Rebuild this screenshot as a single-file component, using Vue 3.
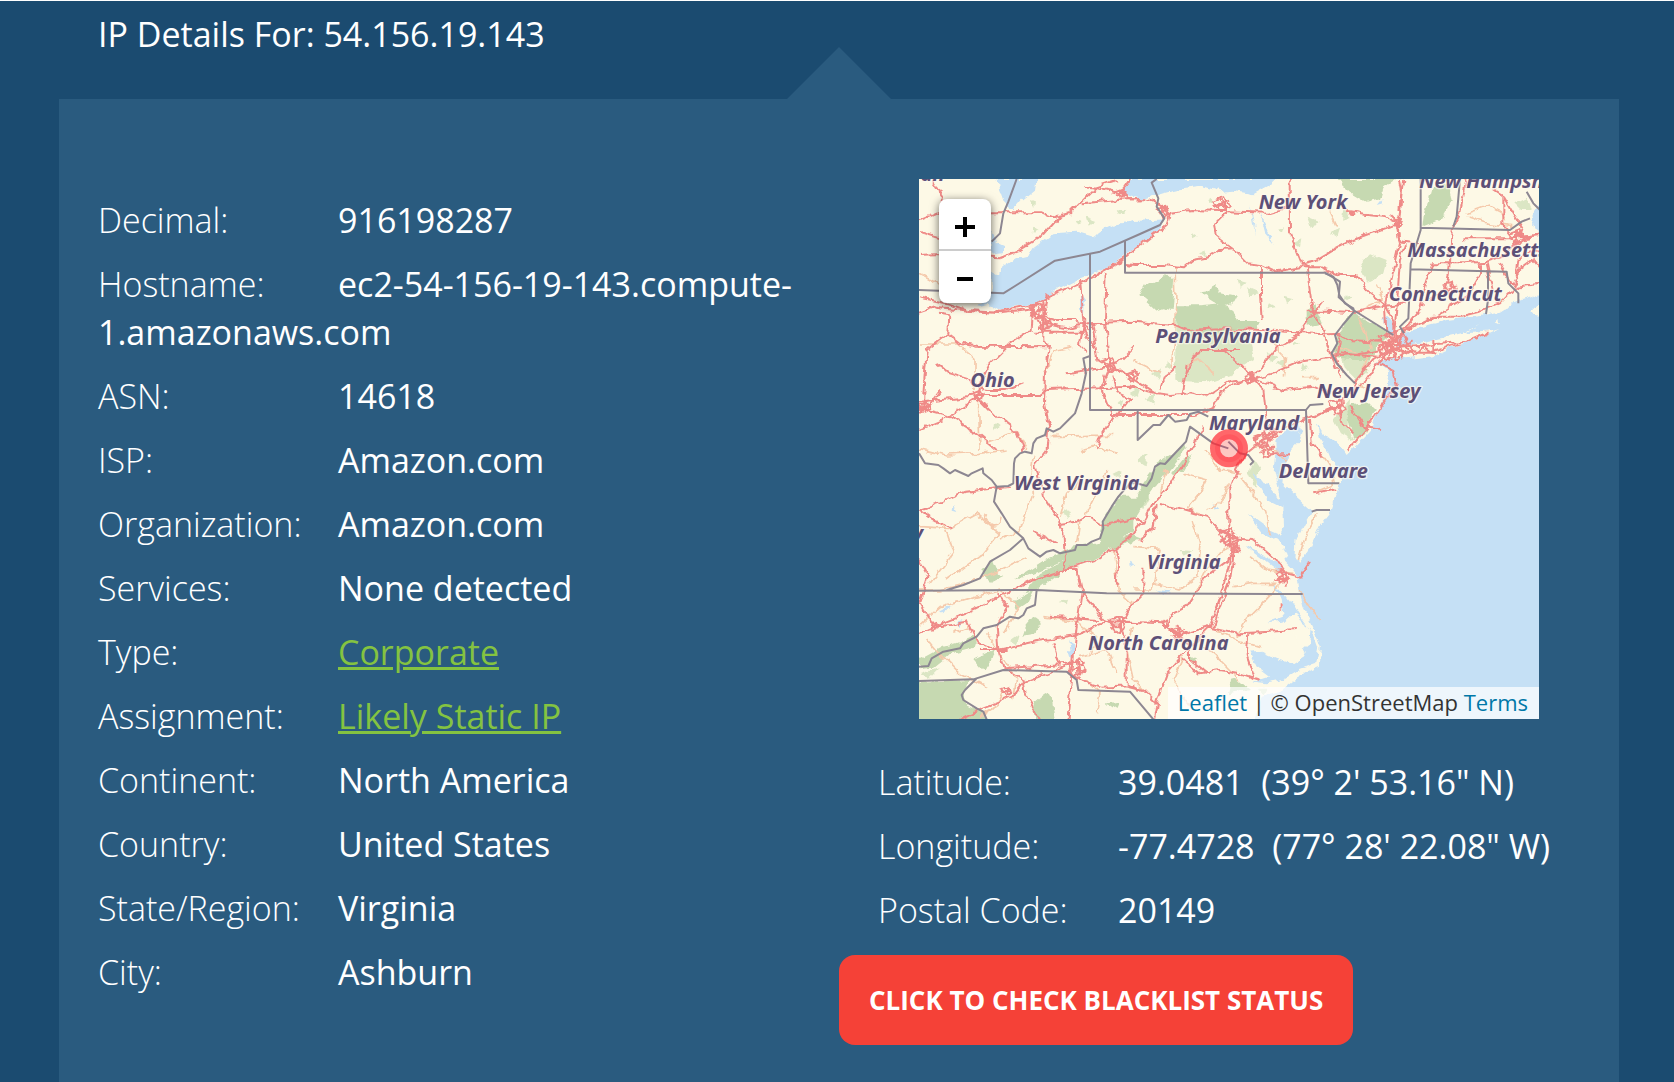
<script setup>
const facts = [
  { label: 'Decimal', value: '916198287' },
  { label: 'Hostname', value: 'ec2-54-156-19-143.compute-1.amazonaws.com' },
  { label: 'ASN', value: '14618' },
  { label: 'ISP', value: 'Amazon.com' },
  { label: 'Organization', value: 'Amazon.com' },
  { label: 'Services', value: 'None detected' },
  { label: 'Type', value: 'Corporate', link: true },
  { label: 'Assignment', value: 'Likely Static IP', link: true },
  { label: 'Continent', value: 'North America' },
  { label: 'Country', value: 'United States' },
  { label: 'State/Region', value: 'Virginia' },
  { label: 'City', value: 'Ashburn' },
]

const position = [
  { label: 'Latitude', value: '39.0481\u00a0 (39° 2\' 53.16" N)' },
  { label: 'Longitude', value: '-77.4728\u00a0 (77° 28\' 22.08" W)' },
  { label: 'Postal Code', value: '20149' },
]

// Map geometry: three units to one pixel at natural size.
const water = [
  'M293 57L410 57L405 92L370 120L345 150L325 150L312 130L298 90Z',
  'M690 57L1130 57L1110 75L1060 103L1000 92L960 97L900 80L840 88L790 100L730 118L680 105L672 90Z',
  'M275 210L285 225L290 245L312 255L312 280L275 284Z',
  'M275 400L275 332L300 345L304 325L350 295L388 286L400 265L460 220L530 215L580 230L605 212L640 195L700 183L795 178L770 215L700 270L620 325L540 355L470 390L410 430L350 440L300 452L265 432L240 437L255 440L232 436Z',
  'M1917 132L1900 160L1893 180L1903 205L1930 225Z',
  'M1930 390L1890 415L1840 430L1800 455L1740 468L1640 480L1570 500L1520 518L1494 535L1490 560L1480 590L1430 605L1455 625L1467 632L1460 680L1455 712L1430 765L1410 812L1375 850L1340 885L1330 870L1310 850L1285 835L1262 812L1248 788L1256 830L1282 868L1295 900L1318 935L1320 970L1306 1005L1290 1058L1262 1095L1248 1125L1230 1165L1200 1205L1186 1195L1190 1140L1215 1090L1238 1055L1215 1035L1180 1005L1150 975L1154 930L1170 880L1198 850L1208 808L1180 785L1160 815L1140 822L1126 845L1128 885L1124 935L1137 990L1150 1040L1152 1100L1135 1140L1160 1180L1150 1200L1175 1225L1192 1245L1198 1290L1210 1340L1232 1385L1250 1425L1262 1462L1260 1520L1220 1537L1180 1560L1130 1600L1085 1610L1060 1690L1930 1690Z',
  'M1120 1265L1150 1300L1180 1340L1205 1385L1232 1405L1228 1450L1205 1470L1215 1490L1180 1512L1130 1496L1085 1475L1050 1478L1070 1520L1110 1550L1060 1565L1100 1570L1150 1560L1200 1530L1245 1515L1255 1460L1240 1420L1215 1385L1190 1350L1150 1385L1100 1390L1155 1370L1145 1320Z',
  'M1060 940L1085 955L1120 1000L1150 1020L1150 1045L1100 1020L1080 985Z',
  'M1040 1060L1095 1100L1140 1120L1150 1145L1085 1120Z',
  'M1030 1155L1090 1185L1130 1205L1160 1245L1140 1240L1090 1200Z',
  'M1052 135L1064 180L1070 235L1062 190ZM1080 160L1095 220L1125 255L1105 215ZM1430 135L1450 110L1448 130ZM540 400L555 420L552 460L540 445Z',
  'M1450 480L1465 470L1482 490L1480 525L1462 510Z',
  'M210 185l8 14l-10 6zM1125 110l6 22l-8 -4zM160 1035l12 18l-14 -4zM120 1350l30 -14l-18 24zM690 1205l16 8l-14 8zM505 1440l14 8l2 44l-12 -8zM170 1385l20 -4l-8 18zM940 1030l18 16l-10 2zM770 1290l44 4l-20 8z',
]

const islands = [
  'M1490 562L1560 548L1640 530L1700 516L1740 490L1700 520L1760 515L1795 508L1720 540L1660 560L1600 588L1520 598L1480 590Z',
  'M1890 460L1930 420L1930 465ZM1784 492L1796 480L1796 495Z',
  'M1115 1420L1145 1425L1175 1418L1200 1445L1165 1460L1130 1450Z',
]

const forest = [
  'M718 405L735 375L765 368L800 340L822 360L820 400L815 450L790 445L770 452L745 428Z',
  'M826 436L900 436L960 430L1000 450L1020 500L1000 520L930 530L880 520L840 500L826 470Z',
  'M900 400L930 395L940 372L960 400L1010 410L1000 430L970 440L940 425Z',
  'M1310 57L1485 57L1450 80L1440 115L1400 125L1350 95Z',
  'M1575 160L1595 80L1650 75L1658 120L1625 180L1570 202Z',
  'M1310 525L1360 455L1475 520L1430 560L1410 600L1340 600L1300 590Z',
  'M1220 460L1245 430L1270 490L1220 500ZM990 500L1020 480L1080 480L1070 508Z',
  'M1340 740L1370 730L1400 725L1425 750L1395 820L1365 840L1350 800Z',
  'M610 1080L655 1010L700 1010L770 915L830 875L855 850L860 865L800 940L740 1020L700 1085L700 1110L640 1160L590 1195L480 1235L410 1290L370 1300L420 1240L500 1200L380 1250L350 1255L450 1190L520 1160L600 1145Z',
  'M650 1145L700 1120L728 1130L690 1150L620 1170ZM810 940L850 890L878 882L850 930L820 945Z',
  'M240 1240L275 1200L290 1235L310 1245L270 1265ZM340 1320L400 1290L380 1330L350 1350Z',
  'M57 1500L130 1460L170 1450L230 1425L225 1460L150 1480L100 1520L57 1525Z',
  'M50 1565L215 1560L185 1600L195 1630L250 1655L255 1690L50 1690Z',
  'M220 1500L285 1470L275 1500L250 1535ZM380 1400L405 1370L425 1385L400 1425L370 1430Z',
  'M400 1625L430 1600L455 1610L465 1690L410 1690ZM620 1630L655 1625L650 1650Z',
  'M990 1560L1010 1555L1050 1590L980 1600ZM865 1485L890 1500L875 1510Z',
]

const scrub = [
  'M826 480L1020 480L1050 540L1062 600L1000 640L920 667L826 662Z',
  'M1310 560L1430 560L1410 600L1400 640L1370 660L1340 630ZM1300 780L1350 720L1345 810L1365 845L1320 820Z',
  'M1840 130L1880 110L1895 150L1860 150ZM1380 310L1410 280L1460 300L1450 340L1400 365Z',
  'M1045 940L1060 900L1080 930L1065 985ZM700 1030L760 990L730 1050ZM480 1060l20 -12l14 24z',
  'M390 120l20 8l-14 12zM560 170l26 10l-20 14zM650 150l26 4l-16 12zM400 200l16 10l-18 8zM520 180l22 6l-14 10z',
  'M880 220l16 10l-18 8zM930 110l14 12l-20 4zM900 280l18 -6l-2 16zM1180 250l24 -12l-4 24zM1130 210l22 -8l-6 18z',
  'M1220 170l30 12l-18 22zM1330 150l22 18l-26 8zM1290 220l30 -14l-8 26zM1010 360l30 8l-24 22zM1040 385l34 14l-20 10z',
  'M1150 410l30 8l-22 14zM1110 430l20 12l-28 4zM690 700l30 -16l-10 30zM740 720l30 -20l-8 34zM650 730l20 -10l-6 20z',
  'M760 640l24 -12l-10 28zM800 605l20 14l-22 8zM1100 580l34 8l-24 20zM1130 610l30 -14l-8 26zM1180 540l20 14l-24 4z',
  'M710 900l30 -18l-6 34zM640 945l24 -12l-2 24zM285 790l14 10l-16 8zM330 1440l26 -18l-8 30zM840 1170l40 4l-26 16z',
  'M1210 610l20 10l-24 10zM1340 400l18 10l-20 10zM1070 1580l30 0l-8 24zM480 1325l24 -6l-4 14zM60 1540l60 -20l-30 30z',
]

const minorRoads = [
  'M57 552L175 552L222 595L222 690M235 720L240 870M57 340L120 375M455 830L570 826L640 826M260 850L350 815L380 870M825 320L828 430L815 620',
  'M57 865L140 885L240 880L320 870M57 1100L150 1105L230 1060L300 1120L250 1180L140 1260M260 1060A22 22 0 1 0 300 1070M430 640L470 570L520 560',
  'M57 1290L120 1290L200 1270L300 1230L380 1190M130 1090L160 1180L90 1270M300 1140L360 1110L400 1000L390 960L400 890',
  'M57 1400L120 1340L220 1310L300 1290L360 1340L310 1420M540 870L580 860L660 880M540 960L500 1000L480 1070M540 1080L530 1150',
  'M620 930L600 980L560 1060M640 1170L655 1290L700 1330M700 1160L780 1165L760 1290L700 1290M800 930L780 1000M850 940L920 960L900 1000L860 1050L900 1060',
  'M880 1080L900 1150L890 1250L840 1290L760 1270M920 1050L960 1030L985 970M990 1160L960 1180L920 1230L890 1290M1020 950L1060 1000L1100 1050L1110 1120',
  'M1050 1190L1100 1230L1180 1240M1000 1280L1060 1270L1130 1270M1150 1260L1080 1340L1040 1380L1010 1430M430 1370L530 1385L590 1430L570 1480',
  'M540 1490L620 1470L650 1540M700 1400L680 1470L700 1560L760 1620M850 1490L820 1560L870 1640M900 1450L960 1500L1020 1560M940 1400L1010 1440L1080 1460',
  'M260 1420L300 1480L350 1560L340 1620M120 1480L180 1540L260 1580M160 1420L210 1400M80 1440L130 1500M310 1590L290 1640L240 1670M560 1560L600 1600L590 1660',
  'M1700 160L1770 135L1800 150L1820 185M1700 170L1760 190L1840 200M1260 880L1290 920L1300 975L1240 1000M1255 1060L1215 1130L1195 1200M1320 700L1380 680L1440 700',
  'M1200 1290L1230 1340L1262 1380M1380 470L1410 560L1390 640M1310 560L1380 580M1200 650L1260 650M1110 540L1160 590L1150 650M1060 860L1130 870L1160 900',
  'M700 600L780 640M860 620L900 600L940 640M1270 120L1310 200M1430 370L1450 420L1400 440M920 870L960 930L1020 940',
]

const majorRoads = [
  'M57 185L120 158L300 157L425 157L460 172L510 160L560 110L590 80L650 60M95 57L128 110L128 160M57 216L118 235M57 288L120 285L300 295L350 275L430 225L480 168',
  'M548 130L600 125L680 118L740 118L790 135L810 160L800 195L730 250L680 290L625 325L540 370L440 410L400 435L300 455L200 450L140 430L57 412',
  'M57 458L110 440L200 452L300 460L400 448L410 432M800 160L880 150L1020 155L1100 158L1180 135M1340 155L1400 165L1450 170L1490 190L1496 230M550 75L590 80L660 100L690 57M665 100L690 118L720 118',
  'M940 135L975 125L975 160L945 190L950 230L1000 270L1040 310L1080 315L1080 400L1085 480M1169 57L1170 220L1205 310L1220 320L1230 400L1240 460L1270 510L1285 560L1300 600L1320 655',
  'M675 312L700 315L790 315L855 322L880 300L930 290L960 270L1000 268M960 240L1000 268M1060 315L1085 318L1120 335L1200 322L1260 322L1320 345L1370 345L1400 390L1450 430L1480 480L1480 530',
  'M1205 310L1250 300L1300 270L1360 240L1470 200L1496 190M1496 57L1505 100L1494 220L1500 250L1470 380L1455 450L1460 530M1496 240L1560 250M1496 190L1470 165',
  'M1510 57L1498 150M1515 250L1500 300L1490 440L1480 540M1690 310L1760 305L1810 290L1860 230L1930 225M1700 57L1680 160L1655 210L1650 310L1640 380L1590 420',
  'M1480 540L1540 500L1600 470L1680 470L1740 455L1800 430L1850 380L1930 370M1480 520L1520 505L1590 480L1650 440L1700 410L1740 340L1740 310M1500 530L1560 450L1580 370L1600 310L1690 310',
  'M1760 310L1780 400L1760 430M1800 310L1840 380L1860 330L1900 300L1930 340M1690 235L1840 235L1870 210L1810 110L1780 90M1810 110L1810 200L1840 235L1930 222M1850 350L1855 300L1880 280L1930 270',
  'M120 455L148 460L145 520L80 570L70 700L70 750L57 760M140 520L180 550L225 560L450 562M400 435L395 510L330 550L270 610L245 660L235 705M430 420L430 540L450 560L435 640L432 730L445 800L440 870L405 915L420 970',
  'M57 725L100 720L235 705L420 705L440 690L600 685L690 680L770 700L810 705L870 700L920 710L950 690L990 665L1070 655L1120 640L1200 605L1290 590L1370 585L1440 570',
  'M57 810L130 780L235 712M235 712L290 770L350 815L370 870M120 695L90 735L70 750L150 770L230 820L290 870M190 545L230 555L250 560M110 610L150 640L200 655L260 690L320 690L370 670',
  'M440 400L430 490L500 505L560 490L700 485L826 495L860 510L960 505L1080 510L1160 515L1285 520L1320 518M540 360L550 480L540 560L560 580M620 340L615 480L625 590L640 620L690 650',
  'M580 490L595 600L630 620L500 640M640 620L700 560M630 620L605 680L640 770L600 830L587 870M640 650L655 700L690 715L650 770M690 650L770 700M830 618L790 650L775 690',
  'M860 620L845 700M860 640L900 570L1020 570M700 665L680 640L640 620M390 460L470 480L520 480L570 510M400 515L560 515M545 490L560 530L590 560',
  'M630 765L880 765L940 745L960 700L1020 665L1060 650L1130 560L1190 530L1240 460L1270 420M1060 655L1030 620L970 570M1060 655L1090 690L1100 780L1080 830L1060 840',
  'M1060 655L1150 690L1240 680L1290 700M1220 455L1280 455L1360 460L1430 440L1520 430M1320 520L1310 590L1330 640M1320 580L1430 590M1310 520L1340 540L1440 545L1560 560',
  'M1480 560L1440 600L1400 660L1360 690L1310 740L1240 770L1160 800L1090 840L1040 880L1010 930L985 990L985 1100L995 1180L970 1280L930 1400L870 1460L800 1540L770 1630L760 1690',
  'M1490 560L1420 600L1370 660L1350 700L1300 750L1230 770M1440 610L1480 630L1490 670L1430 760L1400 805L1345 870M1310 730L1330 790L1360 820M1350 740L1390 800L1440 810M1230 780L1235 850L1265 890',
  'M1500 560L1560 555L1640 550L1700 545L1760 520M1490 575L1600 575L1680 550M1430 540L1520 580M1460 520L1500 570M1440 570L1510 540M1520 560L1540 590L1570 560L1600 580L1600 540',
  'M400 1115L470 1150M420 970L430 1010L470 1070L490 1120L495 1200L490 1230L530 1230L545 1300L530 1400L520 1500L505 1690M57 1050L130 1025L200 995L330 980M60 1050L100 1080L160 1100',
  'M480 1092L530 1085L560 1070L600 1095L650 1085L700 1075L730 1085L760 1030L820 960L860 890L910 800M490 1230L400 1260L300 1310L200 1360L100 1400L57 1420M500 1230L590 1200L680 1140L730 1080',
  'M57 1200L85 1250L60 1330L100 1400L150 1395L200 1385L225 1440L290 1470L400 1445L530 1425L600 1390L690 1385L780 1390L840 1425L930 1400L1020 1420L1110 1415L1190 1410',
  'M290 1300L325 1340L290 1400L295 1470L310 1525L370 1560L380 1610L430 1690M310 1525L520 1510L370 1570L340 1610L250 1645L160 1690M460 1450L480 1520M450 1370L600 1380M240 1470L320 1470',
  'M780 1035L850 1050L920 1070L960 1110L1000 1135L1060 1140L1090 1165L1130 1200L1160 1240L1200 1250L1230 1205M1000 1150L1000 1190L930 1240L900 1280L860 1340L820 1360L800 1400L870 1460L870 1500L920 1540',
  'M545 1300L580 1340L620 1390L660 1400M660 1395L690 1340L730 1300L730 1220M660 1395L680 1450L680 1570L720 1590M650 1280L655 1200L645 1160M1000 1190L990 1260L960 1340L940 1400',
  'M670 1575L730 1590L770 1630M505 1530L540 1560L600 1580L700 1575M850 1500L900 1540L960 1530L1020 1540L1080 1560M1045 1420L1040 1490L1060 1550M960 1110L1010 1130L970 1150',
  'M1140 1235L1150 1260L1120 1260M1160 1240L1160 1280M1145 1330L1145 1350M1010 1140L1010 1180M770 1035L760 1110L720 1140M1240 1000L1290 990L1310 985M1110 880L1170 880',
]

// Tangles of streets round the larger cities.
const cities = [
  [235, 708, 16], [415, 455, 24], [435, 490, 20], [630, 615, 24], [985, 1130, 26], [1003, 1165, 16], [1145, 1250, 20],
  [655, 1395, 24], [530, 1522, 24], [830, 1418, 18], [320, 1595, 14], [75, 742, 16], [965, 130, 22], [790, 155, 18],
  [1085, 845, 24], [1110, 820, 22], [1470, 545, 34], [1500, 560, 38], [1460, 575, 26], [1495, 190, 14], [1850, 230, 22],
  [1310, 740, 24], [695, 650, 18], [1050, 655, 16], [105, 1400, 12], [795, 1395, 14], [1650, 385, 18], [665, 100, 14], [1100, 870, 22],
]

const borders = [
  'M350 57L325 125L310 160L300 220L275 245M57 390L275 398L310 400L350 375L465 302L600 275L720 222L780 195L793 175L780 155L770 140L775 115L755 68L770 57',
  'M570 280L570 750L1218 750M675 240L675 338L1275 338L1320 365L1316 412L1360 450L1480 525M713 750L713 840L760 795L780 795L805 765L825 785L860 780L870 762L895 755L925 770',
  'M1275 340L1300 350L1312 375L1318 405L1335 430L1360 445L1362 455L1328 495L1305 525L1312 550L1295 580L1310 610L1340 645L1365 670M1218 750L1230 735L1270 732M1218 750L1225 970L1318 970M1235 1055L1250 1050L1290 1050',
  'M570 588L550 595L558 640L545 700L525 760L505 780L480 805L460 815L440 805L435 825L410 835L400 850L395 880L375 875L360 880L345 895L342 910L340 970L325 978L290 980L275 960L250 940L248 925L215 940L205 948L165 930L150 940L130 925L115 915L75 910L57 880',
  'M290 980L282 1025L305 1060L330 1100L370 1135L385 1165L420 1190L440 1175L460 1170L480 1180L525 1170L530 1155L560 1155L575 1145L600 1135L610 1105L608 1085L635 1040L655 1010L690 970L710 970L740 978L755 955L765 920L780 910L795 912L820 885L858 845L870 800L940 850L985 865',
  'M370 1135L330 1170L270 1205L240 1255L190 1275L140 1290M57 1292L410 1290L620 1300L1208 1302M57 1520L85 1518L95 1495L130 1475L180 1465L190 1450L230 1430L250 1405L290 1395L330 1370L355 1375L370 1365L380 1345L405 1335L410 1290',
  'M57 1563L220 1558L310 1530L500 1535L530 1560L535 1590L690 1595L770 1690M230 1555L195 1590L185 1605L190 1620L230 1645L250 1655L265 1690',
  'M1562 57L1562 210L1550 250L1532 310L1525 475L1500 500L1512 520M1680 57L1670 170L1660 200M1562 203L1830 210L1865 185L1890 175M1530 328L1820 335L1825 370L1855 400L1855 430M1764 335L1764 420L1758 462M1880 95L1900 130L1930 160',
  'M985 845L1000 860L1020 880L1045 885L1060 905L1050 915',
]

const places = [
  { name: 'an', x: 62, y: 62 },
  { name: 'New York', x: 1076, y: 146 },
  { name: 'New Hampshire', x: 1558, y: 85 },
  { name: 'Massachusetts', x: 1522, y: 291 },
  { name: 'Connecticut', x: 1466, y: 424 },
  { name: 'Pennsylvania', x: 766, y: 549 },
  { name: 'Ohio', x: 211, y: 682 },
  { name: 'New Jersey', x: 1250, y: 714 },
  { name: 'Maryland', x: 927, y: 809 },
  { name: 'Delaware', x: 1136, y: 953 },
  { name: 'West Virginia', x: 342, y: 991 },
  { name: 'Virginia', x: 740, y: 1226 },
  { name: 'North Carolina', x: 564, y: 1471 },
  { name: 'y', x: 38, y: 1140 },
]
</script>

<template>
  <main class="page">
    <h1 class="title">IP Details For: 54.156.19.143</h1>
    <section class="panel">
      <div class="column facts">
        <p v-for="fact in facts" :key="fact.label" class="row">
          <span class="label">{{ fact.label }}:</span>
          <a v-if="fact.link" href="#">{{ fact.value }}</a>
          <span v-else class="value">{{ fact.value }}</span>
        </p>
      </div>
      <div class="column">
        <div class="map">
          <svg class="tiles" viewBox="57 57 1860 1620" preserveAspectRatio="xMidYMid slice" role="img" aria-label="Map">
            <defs>
              <filter id="natural" filterUnits="userSpaceOnUse" x="30" y="30" width="1920" height="1680">
                <feTurbulence type="fractalNoise" baseFrequency="0.03" numOctaves="3" seed="4" />
                <feDisplacementMap in="SourceGraphic" scale="24" xChannelSelector="R" yChannelSelector="G" />
              </filter>
            </defs>
            <rect class="land" x="57" y="57" width="1860" height="1620" />
            <g filter="url(#natural)">
              <path v-for="d in scrub" :key="d" class="scrub" :d="d" />
              <path v-for="d in forest" :key="d" class="forest" :d="d" />
              <path v-for="d in water" :key="d" class="water" :d="d" />
              <path v-for="d in islands" :key="d" class="land" :d="d" />
              <path v-for="d in minorRoads" :key="d" class="minor" :d="d" />
              <path v-for="d in majorRoads" :key="d" class="major" :d="d" />
              <path
                v-for="[x, y, r] in cities"
                :key="`${x}-${y}`"
                class="major"
                :d="`M${x - r} ${y - r / 2}L${x + r / 3} ${y - r}L${x + r} ${y + r / 3}L${x - r / 4} ${y + r}ZM${x - r} ${y + r / 2}L${x + r} ${y - r / 2}M${x} ${y - r}L${x + r / 4} ${y + r}`"
              />
            </g>
            <path v-for="d in borders" :key="d" class="border" :d="d" />
            <text v-for="p in places" :key="p.name" class="place" :x="p.x" :y="p.y">{{ p.name }}</text>
            <circle class="marker" cx="987" cy="865" r="42" />
          </svg>
          <div class="zoom">
            <button type="button" aria-label="Zoom in">
              <svg viewBox="0 0 52 50"><path d="M16 28H36M26 18V38" /></svg>
            </button>
            <button type="button" aria-label="Zoom out">
              <svg viewBox="0 0 52 50"><path d="M18 27H34" /></svg>
            </button>
          </div>
          <div class="attribution"><a href="#">Leaflet</a> | © OpenStreetMap <a href="#">Terms</a></div>
        </div>
        <div class="position">
          <p v-for="item in position" :key="item.label" class="row">
            <span class="label">{{ item.label }}:</span>
            <span class="value">{{ item.value }}</span>
          </p>
        </div>
        <button class="check" type="button">CLICK TO CHECK BLACKLIST STATUS</button>
      </div>
    </section>
  </main>
</template>

<style>
body {
  background: #1b4b70;
}
</style>

<style scoped>
.page {
  box-sizing: border-box;
  min-height: 100vh;
  display: flex;
  flex-direction: column;
  padding: 0 55px 0 59px;
  border-top: 1px solid #fff;
  background: #1b4b70;
  color: #fff;
  font-family: "Open Sans", "Noto Sans", sans-serif;
  font-size: 34px;
  line-height: 48px;
}

.title {
  margin: 0;
  padding: 9px 39px 41px;
  font-size: 34px;
  font-weight: 400;
}

.panel {
  position: relative;
  flex: 1;
  display: flex;
  padding-top: 80px;
  padding-bottom: 37px;
  background: #2a5b7f;
}

.panel::before {
  content: "";
  position: absolute;
  bottom: 100%;
  left: 50%;
  margin-left: -52px;
  border: 52px solid transparent;
  border-top-width: 0;
  border-bottom-color: #2a5b7f;
}

.column {
  box-sizing: border-box;
  flex: none;
  width: 50%;
}

.facts {
  padding: 17px 39px 0;
}

.row {
  margin: 0 0 16px;
}

.label {
  display: inline-block;
  width: 240px;
  font-weight: 300;
}

.value {
  font-weight: 500;
}

.facts a {
  color: #84c341;
}

.map {
  position: relative;
  height: 540px;
  margin: 0 80px;
  overflow: hidden;
}

.tiles {
  display: block;
  width: 100%;
  height: 100%;
}

.land {
  fill: #fdf9e6;
}

.water {
  fill: #c5e0f5;
}

.forest {
  fill: #c6d9b1;
}

.scrub {
  fill: #dbe6c4;
}

.minor,
.major,
.border {
  fill: none;
  stroke-linejoin: round;
}

.minor {
  stroke: #f5c9ab;
  stroke-width: 5;
}

.major {
  stroke: #ef8a87;
  stroke-width: 6;
}

.border {
  stroke: #8d8792;
  stroke-width: 6;
}

.place {
  fill: #5d5077;
  stroke: #fdf9f0;
  stroke-opacity: 0.7;
  stroke-width: 8;
  stroke-linejoin: round;
  paint-order: stroke;
  font-family: "Noto Sans", sans-serif;
  font-size: 60px;
  font-style: italic;
  font-weight: 700;
}

.marker {
  fill: #f03;
  fill-opacity: 0.2;
  stroke: #ff2a35;
  stroke-opacity: 0.7;
  stroke-width: 30;
}

.zoom {
  position: absolute;
  top: 20px;
  left: 20px;
  width: 52px;
  border-radius: 8px;
  background: #fff;
  box-shadow: 0 2px 10px rgba(0, 0, 0, 0.6);
}

.zoom button {
  display: block;
  width: 52px;
  height: 52px;
  padding: 0;
  border: 0;
  background: none;
}

.zoom button:first-child {
  border-bottom: 2px solid #ccc;
}

.zoom svg {
  display: block;
  width: 52px;
  height: 50px;
}

.zoom path {
  stroke: #000;
  stroke-width: 4;
}

.attribution {
  position: absolute;
  right: 0;
  bottom: 0;
  padding: 0 11px 2px 10px;
  background: rgba(255, 255, 255, 0.7);
  color: #333;
  font-size: 22px;
  line-height: 30px;
  white-space: nowrap;
}

.attribution a {
  color: #0078a8;
  text-decoration: none;
}

.position {
  padding: 39px 0 5px 39px;
}

.check {
  display: block;
  height: 90px;
  padding: 0 30px;
  border: 0;
  border-radius: 16px;
  background: #f54137;
  color: #fff;
  font: 700 26px/48px "Open Sans", sans-serif;
  white-space: nowrap;
}
</style>
